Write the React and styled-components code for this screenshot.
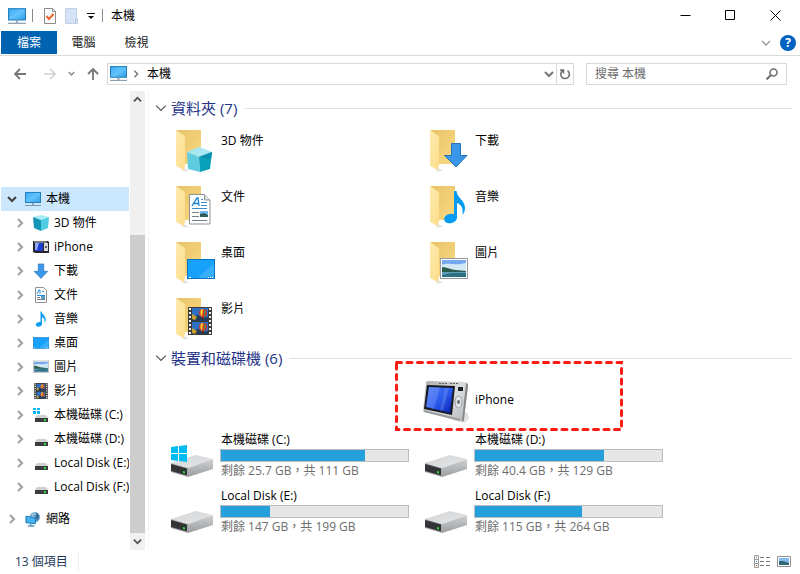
import { useState } from "react";
import styled, { createGlobalStyle } from "styled-components";

const GlobalStyle = createGlobalStyle`
  * {
    box-sizing: border-box;
  }
  body {
    margin: 0;
    background: #fff;
    color: #000;
    font-family: "Open Sans", "Noto Sans CJK TC", sans-serif;
    font-size: 12px;
    line-height: 16px;
  }
  button, input {
    font: inherit;
    color: inherit;
  }
  button {
    border: none;
    padding: 0;
    background: none;
  }
  svg {
    display: block;
    flex: none;
  }
`;

/* ---------- data ---------- */

const folders = [
  { name: "3D 物件", art: "cube" },
  { name: "下載", art: "download" },
  { name: "文件", art: "doc" },
  { name: "音樂", art: "music" },
  { name: "桌面", art: "desktop" },
  { name: "圖片", art: "picture" },
  { name: "影片", art: "video" },
];

const disks = [
  { name: "本機磁碟 (C:)", free: "25.7 GB", total: "111 GB", used: 77, system: true },
  { name: "本機磁碟 (D:)", free: "40.4 GB", total: "129 GB", used: 69 },
  { name: "Local Disk (E:)", free: "147 GB", total: "199 GB", used: 26 },
  { name: "Local Disk (F:)", free: "115 GB", total: "264 GB", used: 57 },
];

const treeItems = [
  { name: "3D 物件", art: "cube" },
  { name: "iPhone", art: "player" },
  { name: "下載", art: "download" },
  { name: "文件", art: "doc" },
  { name: "音樂", art: "music" },
  { name: "桌面", art: "desktop" },
  { name: "圖片", art: "picture" },
  { name: "影片", art: "video" },
  { name: "本機磁碟 (C:)", art: "system" },
  { name: "本機磁碟 (D:)", art: "drive" },
  { name: "Local Disk (E:)", art: "drive" },
  { name: "Local Disk (F:)", art: "drive" },
];

/* ---------- icons ---------- */

const Chevron = ({ dir = "right", size = 10, color = "#a0a0a0", weight = 2 }) => {
  const paths = {
    right: "M3 1l4 4-4 4",
    down: "M1 3l4 4 4-4",
    up: "M1 7l4-4 4 4",
  };
  return (
    <svg width={size} height={size} viewBox="0 0 10 10" fill="none" stroke={color} strokeWidth={weight}>
      <path d={paths[dir]} />
    </svg>
  );
};

const Monitor = ({ size = 16 }) => (
  <svg width={size} height={size} viewBox="0 0 16 16">
    <defs>
      <linearGradient id="screen" x1="0" y1="0" x2="1" y2="1">
        <stop offset="0" stopColor="#35a9f4" />
        <stop offset="0.5" stopColor="#63c3fb" />
        <stop offset="1" stopColor="#2f9be8" />
      </linearGradient>
    </defs>
    <rect x="0.5" y="1.5" width="15" height="10" fill="url(#screen)" stroke="#2581bd" />
    <path d="M7 12h2v2H7z" fill="#93a7b5" />
    <path d="M0 14.5h16" stroke="#7f99ab" />
  </svg>
);

const Network = () => (
  <svg width="16" height="16" viewBox="0 0 17 16">
    <circle cx="10.5" cy="6" r="5.5" fill="#5f9fcd" />
    <path d="M10.5 0.5c-3 2-3 9 0 11M5 6h11M6 3h9" stroke="#c6e0f2" strokeWidth="0.7" fill="none" />
    <path d="M12 1l3 3-1 5-3-2z" fill="#366b9b" />
    <path d="M1 5l10 2v6L1 12z" fill="#43b4f4" stroke="#1d76ae" />
    <path d="M6 13v2M3 15.5h7" stroke="#5f97bb" strokeWidth="1.5" />
  </svg>
);

// Balloon scene that fills each frame of the film strip
const Frame = ({ y, h }) => (
  <svg x="24" y={y} width="16" height={h} viewBox={`0 0 16 ${h}`}>
    <rect width="16" height={h} fill="#2f6fc4" />
    <path d="M0 9l6-2 5 3 5-1v6H0z" fill="#243c58" />
    <path d="M0 6l5 3-2 3-3-1z" fill="#c7a12c" />
    <circle cx="11" cy="5" r="4" fill="#d7322c" />
    <path d="M9 1.5c-1 2-1 5 1 7.5l1-8z" fill="#f3d22b" />
    <path d="M12 1.2c2 2 2 5 0 7.5z" fill="#3f9b46" />
    <path d="M10 9h2v2h-2z" fill="#5b3412" />
  </svg>
);

// Drawings on a shared 48px grid, placed where they sit on top of a folder
const art = {
  cube: (
    <>
      <path d="M31 20l13 5-13 5-12-5z" fill="#a5e8f2" />
      <path d="M19 25l12 5 1 15-12-3z" fill="#5fcbdf" />
      <path d="M31 30l13-5-2 17-10 3z" fill="#08a0ba" />
      <path d="M31 30l13-5-1 7z" fill="#0b8fb0" />
    </>
  ),
  download: <path d="M29.5 16.5h9v12h6.5l-11 11.5-11.5-11.5h7z" fill="#3a96e8" stroke="#2473bb" />,
  doc: (
    <>
      <path d="M21.5 11.5h15l5.5 5.5v24h-20.5z" fill="#fff" stroke="#8d9297" />
      <path d="M36.5 11.5v5.5h5.5" fill="#e2e6ea" stroke="#8d9297" />
      <path d="M24 23l5-8h1l1 8M26 20.5h5" fill="none" stroke="#1c83d4" strokeWidth="1.4" />
      <path d="M33 16.5h2M33 19.5h6M33 22.5h6M24 25.5h15" stroke="#3a8fd0" />
      <path d="M24 29.5h7M24 33.5h7M24 37.5h15" stroke="#7a7f85" />
      <path d="M32 28h8v6h-8z" fill="#76b8ee" />
      <path d="M32 31l4-1 4 2v2h-8z" fill="#2f5d5a" />
    </>
  ),
  music: (
    <>
      <ellipse cx="28.5" cy="35.5" rx="6.5" ry="4.7" transform="rotate(-12 28.5 35.5)" fill="#069bf2" />
      <path d="M32 8h2.5c.5 7 8.5 9 8.5 17 0 3-1 5-2.5 7 .8-6-.5-10-5.5-12v15h-3z" fill="#069bf2" />
    </>
  ),
  desktop: (
    <>
      <rect x="19.5" y="20.5" width="27" height="19" fill="#18a1fb" stroke="#0b74c4" />
      <path d="M30 39l16-15v15z" fill="#36affe" />
      <path d="M21 38.5h2M40 38.5h1M42 38.5h1M44 38.5h1" stroke="#fff" />
    </>
  ),
  picture: (
    <>
      <rect x="18.5" y="19.5" width="27" height="20" fill="#fff" stroke="#969a9e" />
      <path d="M20 21h24v17H20z" fill="#74a9f2" />
      <path d="M20 26c6-3 10 1 24-2v8H20z" fill="#d3e8f5" />
      <path d="M20 28c5 0 9 3 14 3l10 1v2H20z" fill="#2a5a4c" />
      <path d="M20 33h24v5H20z" fill="#5f9fba" />
      <path d="M20 36l10-2h14v4H20z" fill="#2c6f80" />
    </>
  ),
  video: (
    <>
      <path d="M20 12h24v28H20z" fill="#3b3b3b" />
      <path d="M22 13v27M42 13v27" stroke="#f2f2f2" strokeWidth="2" strokeDasharray="2 2" />
      <Frame y={13} h={13} />
      <Frame y={27} h={12} />
    </>
  ),
  player: (
    <>
      <defs>
        <linearGradient id="body" x1="0" y1="0" x2="1" y2="1">
          <stop offset="0" stopColor="#a9abad" />
          <stop offset="0.5" stopColor="#dcddde" />
          <stop offset="1" stopColor="#b6b8ba" />
        </linearGradient>
        <linearGradient id="lcd" x1="0" y1="0" x2="1" y2="1">
          <stop offset="0" stopColor="#4a7cf5" />
          <stop offset="0.5" stopColor="#2a5bef" />
          <stop offset="1" stopColor="#0a1fae" />
        </linearGradient>
      </defs>
      <path d="M30 44l13 3 4-5-2-6z" fill="#000" opacity="0.12" />
      <path d="M5 5l38 1c2 0 3 1 3 3l-4 34c0 2-2 3-4 2L2 36c-1 0-1-1-1-2L4 7z" fill="url(#body)" />
      <path d="M44 7c1 0 2 1 2 3l-4 33c0 2-1 3-2 2z" fill="#85878a" />
      <path d="M2 34l36 9v2L2 36z" fill="#97999c" />
      <path d="M5 9l28 1-3 29L2 33z" fill="#16181f" />
      <path d="M7 11l24 1-3 25L4 31z" fill="url(#lcd)" />
      <path d="M7 11l11 .5L12 33l-8-2z" fill="#fff" opacity="0.14" />
      <path d="M23 11.7h4L21 35l-3-1z" fill="#fff" opacity="0.14" />
      <path d="M17 7.5h8M28 7.5h8" stroke="#5b5e62" strokeDasharray="2 1" />
      <path d="M36 11h5v4h-5z" fill="#1e2023" />
      <ellipse cx="36.5" cy="26" rx="3.5" ry="6" fill="#e4e5e6" stroke="#9a9da1" />
      <ellipse cx="36.5" cy="26" rx="1.5" ry="2" fill="#6a6d71" />
    </>
  ),
  drive: (
    <>
      <defs>
        <linearGradient id="lid" x1="0" y1="0" x2="1" y2="1">
          <stop offset="0" stopColor="#d3d4d6" />
          <stop offset="1" stopColor="#e6e7e8" />
        </linearGradient>
        <linearGradient id="side" x1="0" y1="0" x2="0" y2="1">
          <stop offset="0" stopColor="#cfd0d2" />
          <stop offset="1" stopColor="#9b9da0" />
        </linearGradient>
      </defs>
      <path d="M3 31l25-8 17 4-25 9z" fill="url(#lid)" />
      <path d="M20 36l25-9v10l-25 8z" fill="url(#side)" />
      <path d="M3 31l17 5v9L3 40z" fill="#a3a5a7" />
      <path d="M3 32l16 4.5v7L3 39z" fill="#323436" />
      <path d="M15 39l2 .5v2l-2-.5z" fill="#25e03a" />
    </>
  ),
};

const winLogo = (
  <path d="M3 15l7-1v7H3zM11 14l8-1v8h-8zM3 22h7v7l-7-1zM11 22h8v8l-8-1z" fill="#00bcf2" />
);

const folderBase = (
  <>
    <defs>
      <linearGradient id="folderBack" x1="0" y1="0" x2="1" y2="1">
        <stop offset="0" stopColor="#eac268" />
        <stop offset="1" stopColor="#f7da83" />
      </linearGradient>
      <linearGradient id="folderFlap" x1="0" y1="0" x2="1" y2="1">
        <stop offset="0" stopColor="#ffebb0" />
        <stop offset="1" stopColor="#fbdd8b" />
      </linearGradient>
    </defs>
    <path d="M13 43l5 2 3-2-5-2z" fill="#000" opacity="0.1" />
    <path d="M8 3h25v34H15z" fill="url(#folderBack)" />
    <path d="M8 3l9 6v29l-1 5-8-4z" fill="url(#folderFlap)" />
  </>
);

const LargeIcon = ({ name, folder, system }) => (
  <svg width="48" height="48" viewBox="0 0 48 48">
    {folder && folderBase}
    {art[name]}
    {system && winLogo}
  </svg>
);

// Crop of the 48px grid that holds each drawing
const crops = {
  download: "21 15 26 26",
  music: "16 7 34 34",
  desktop: "19 16 28 28",
  picture: "18 16 28 28",
  video: "18 12 28 28",
};

// Simplified drawings for the 16px size
const smallArt = {
  cube: (
    <>
      <path d="M0 2l8-2 8 2-8 3z" fill="#a7ecf5" />
      <path d="M0 2l8 3v11l-7-3z" fill="#1597b8" />
      <path d="M8 5l8-3-1 11-7 3z" fill="#4fcbe2" />
    </>
  ),
  doc: (
    <>
      <path d="M2.5 0.5h8l3 3v12h-11z" fill="#fff" stroke="#8d9297" />
      <path d="M4 7l2-4h1v4M9 4.5h2M4 8.5h8" fill="none" stroke="#2a8ad6" />
      <path d="M4 10.5h3M4 12.5h8" stroke="#7a7f85" />
      <path d="M8 9h4v3H8z" fill="#5d9cc9" />
    </>
  ),
  player: (
    <>
      <path d="M0 2h15l1 1v11H2l-2-1z" fill="#24262c" />
      <path d="M2 4h8v8H2z" fill="#1c3fd0" />
      <path d="M2 4h4l-2 7H2z" fill="#8faaff" />
      <path d="M1 3h13" stroke="#c9cbce" />
      <rect x="11" y="4" width="4" height="8" fill="#d7d9db" />
      <circle cx="13" cy="8" r="1" fill="#3a3c40" />
    </>
  ),
  drive: (
    <>
      <path d="M4 8h9l2 3H2z" fill="#cfd1d3" />
      <path d="M2 11h13v4H2z" fill="#3a3c3e" />
      <path d="M11 12h2v2h-2z" fill="#2bdc3f" />
    </>
  ),
};
smallArt.system = (
  <>
    <path d="M0 1h3v2H0zM4 1h3v2H4zM0 4h3v3H0zM4 4h3v3H4z" fill="#00b4f0" />
    {smallArt.drive}
  </>
);

const SmallIcon = ({ name }) => (
  <svg width="16" height="16" viewBox={crops[name] || "0 0 16 16"}>
    {smallArt[name] || art[name]}
  </svg>
);

/* ---------- page ---------- */

const App = () => {
  const [keyword, setKeyword] = useState("");

  return (
    <Window lang="zh-Hant">
      <GlobalStyle />
      <TitleBar>
        <Monitor size={18} />
        <Divider />
        <QuickTools>
          <button aria-label="內容">
            <svg width="14" height="16" viewBox="0 0 14 16">
              <path d="M1.5 0.5h8l3 3v12h-11z" fill="#fcfcfc" stroke="#8c8c8c" />
              <path d="M9.5 0.5v3h3" fill="none" stroke="#8c8c8c" />
              <path d="M3.5 8l2.5 3 4.5-5" fill="none" stroke="#e8642c" strokeWidth="2" />
            </svg>
          </button>
          <button aria-label="新增資料夾">
            <svg width="14" height="16" viewBox="0 0 14 16">
              <path d="M0.5 0.5h11v10h1v5h-12z" fill="#d6e2f5" stroke="#c3d1e8" />
              <path d="M10.5 15v-4h2" fill="none" stroke="#b4c5e0" />
            </svg>
          </button>
          <button aria-label="自訂快速存取工具列">
            <svg width="8" height="8" viewBox="0 0 8 8">
              <path d="M0 1h8v1H0zM1 4h6L4 7z" fill="#111" />
            </svg>
          </button>
        </QuickTools>
        <Divider />
        <Title>本機</Title>
        <WindowButton aria-label="最小化">
          <svg width="11" height="11" viewBox="0 0 11 11">
            <path d="M0.5 5.5h10" stroke="#000" />
          </svg>
        </WindowButton>
        <WindowButton aria-label="最大化">
          <svg width="11" height="11" viewBox="0 0 11 11">
            <path d="M0.5 0.5h9v9h-9z" fill="none" stroke="#000" />
          </svg>
        </WindowButton>
        <WindowButton aria-label="關閉">
          <svg width="11" height="11" viewBox="0 0 11 11">
            <path d="M0.5 0.5l10 10M10.5 0.5l-10 10" stroke="#000" />
          </svg>
        </WindowButton>
      </TitleBar>

      <Ribbon>
        <Tab $active>檔案</Tab>
        <Tab>電腦</Tab>
        <Tab>檢視</Tab>
        <RibbonTools>
          <button aria-label="展開功能區">
            <Chevron dir="down" weight={1.3} color="#999" />
          </button>
          <HelpButton aria-label="說明">?</HelpButton>
        </RibbonTools>
      </Ribbon>

      <AddressRow>
        <NavButtons>
          <button aria-label="上一頁">
            <svg width="12" height="12" viewBox="0 0 12 12" fill="none" stroke="#777" strokeWidth="1.8">
              <path d="M12 6H1M6 1L1 6l5 5" />
            </svg>
          </button>
          <button aria-label="下一頁">
            <svg width="12" height="12" viewBox="0 0 12 12" fill="none" stroke="#d2d2d2" strokeWidth="1.6">
              <path d="M0 6h11M6 1l5 5-5 5" />
            </svg>
          </button>
          <button aria-label="最近的位置">
            <Chevron dir="down" size={7} color="#888" />
          </button>
          <button aria-label="上一層">
            <svg width="12" height="12" viewBox="0 0 12 12" fill="none" stroke="#777" strokeWidth="1.8">
              <path d="M6 12V1M1 6l5-5 5 5" />
            </svg>
          </button>
        </NavButtons>
        <AddressBox>
          <Monitor size={17} />
          <Chevron size={8} color="#777" weight={1.8} />
          <Crumb href="#">本機</Crumb>
          <button aria-label="先前的位置">
            <Chevron dir="down" color="#777" />
          </button>
          <Refresh aria-label="重新整理">
            <svg width="12" height="12" viewBox="0 0 12 12" fill="none" stroke="#707070" strokeWidth="1.6">
              <path d="M4 2.5a4.3 4.3 0 1 0 4.5.2M1 2h3.5v3.5" />
            </svg>
          </Refresh>
        </AddressBox>
        <SearchBox>
          <input
            aria-label="搜尋"
            placeholder="搜尋 本機"
            value={keyword}
            onChange={(e) => setKeyword(e.target.value)}
          />
          <svg width="12" height="12" viewBox="0 0 12 12" fill="none" stroke="#707070" strokeWidth="1.6">
            <circle cx="7.5" cy="4.5" r="3.5" />
            <path d="M5 7l-4.5 4.5" strokeWidth="2" />
          </svg>
        </SearchBox>
      </AddressRow>

      <Body>
        <Tree>
          <TreeRow $selected>
            <Chevron dir="down" color="#404040" />
            <Monitor />
            <span>本機</span>
          </TreeRow>
          {treeItems.map((item) => (
            <TreeRow key={item.name} $child>
              <Chevron />
              <SmallIcon name={item.art} />
              <span>{item.name}</span>
            </TreeRow>
          ))}
          <NetworkRow>
            <Chevron />
            <Network />
            <span>網路</span>
          </NetworkRow>
        </Tree>
        <ScrollBar>
          <button aria-label="向上捲動">
            <Chevron dir="up" size={9} color="#505050" />
          </button>
          <ScrollThumb />
          <button aria-label="向下捲動">
            <Chevron dir="down" size={9} color="#505050" />
          </button>
        </ScrollBar>

        <Content>
          <GroupHeader>
            <Chevron dir="down" size={12} weight={1} color="#555" />
            <h2>資料夾 (7)</h2>
          </GroupHeader>
          <FolderGrid>
            {folders.map((item) => (
              <Item key={item.name}>
                <LargeIcon name={item.art} folder />
                <FolderName>{item.name}</FolderName>
              </Item>
            ))}
          </FolderGrid>

          <GroupHeader>
            <Chevron dir="down" size={12} weight={1} color="#555" />
            <h2>裝置和磁碟機 (6)</h2>
          </GroupHeader>
          <Grid>
            <DeviceItem>
              <LargeIcon name="player" />
              <DeviceName>iPhone</DeviceName>
              <Highlight>
                <rect x="1.5" y="1.5" width="225" height="67" />
              </Highlight>
            </DeviceItem>
            {disks.map((disk) => (
              <Item key={disk.name}>
                <LargeIcon name="drive" system={disk.system} />
                <DiskInfo>
                  <DiskName>{disk.name}</DiskName>
                  <Bar role="progressbar" aria-label={disk.name} aria-valuenow={disk.used}>
                    <BarFill style={{ width: `${disk.used}%` }} />
                  </Bar>
                  <DiskSpace>{`剩餘 ${disk.free}\uFF0C共 ${disk.total}`}</DiskSpace>
                </DiskInfo>
              </Item>
            ))}
          </Grid>
        </Content>
      </Body>

      <StatusBar>
        <span>13 個項目</span>
        <Divider $light />
        <ViewButtons>
          <button aria-label="詳細資料">
            <svg width="16" height="14" viewBox="0 0 16 14">
              <path d="M0.5 0.5h4v12h-4zM0.5 4.5h4M0.5 8.5h4" fill="none" stroke="#999" />
              <path d="M2 2h1v1H2z" fill="#2d8a4e" />
              <path d="M2 6h1v1H2z" fill="#2f7de0" />
              <path d="M2 10h1v1H2z" fill="#e01f1f" />
              <path d="M6 2.5h4M12 2.5h4M6 6.5h4M12 6.5h4M6 10.5h4M12 10.5h4" stroke="#777" />
            </svg>
          </button>
          <button aria-label="大圖示">
            <svg width="14" height="12" viewBox="0 0 14 12">
              <path d="M0.5 0.5h13v10h-13z" fill="#fff" stroke="#8f8f8f" />
              <path d="M2 2h10v7H2z" fill="#86b9f0" />
              <path d="M2 5h4l6 2v2H2z" fill="#2f6a70" />
            </svg>
          </button>
        </ViewButtons>
      </StatusBar>
    </Window>
  );
};

export default App;

/* ---------- styles ---------- */

const Window = styled.div`
  display: flex;
  flex-direction: column;
  min-height: 100vh;
`;

const TitleBar = styled.header`
  display: flex;
  align-items: center;
  height: 31px;
  padding: 0 2px 0 8px;
`;

const Divider = styled.span`
  width: 1px;
  height: ${(props) => (props.$light ? "18px" : "13px")};
  margin: ${(props) => (props.$light ? "0 10px" : "0 8px 0 6px")};
  background: ${(props) => (props.$light ? "#f0f0f0" : "#8a8a8a")};
`;

const QuickTools = styled.div`
  display: flex;
  align-items: center;
  gap: 8px;
  padding: 0 1px 0 2px;
`;

const Title = styled.h1`
  flex: 1;
  margin: 0;
  font-size: 12px;
  font-weight: 400;
`;

const WindowButton = styled.button`
  display: flex;
  align-items: center;
  justify-content: center;
  width: 45px;
  height: 30px;
`;

const Ribbon = styled.nav`
  display: flex;
  height: 25px;
  padding: 0 4px 0 1px;
  border-bottom: 1px solid #dadbdc;
`;

const Tab = styled.button`
  width: ${(props) => (props.$active ? "56px" : "53px")};
  height: 23px;
  color: ${(props) => (props.$active ? "#fff" : "#222")};
  background: ${(props) => (props.$active ? "#0063b1" : "none")};
`;

const RibbonTools = styled.div`
  display: flex;
  align-items: center;
  gap: 9px;
  margin-left: auto;
`;

const HelpButton = styled.button`
  width: 16px;
  height: 16px;
  border-radius: 50%;
  background: #0063c1;
  color: #fff;
  font-weight: 700;
`;

const AddressRow = styled.div`
  display: flex;
  align-items: center;
  height: 35px;
  padding: 0 13px 0 14px;
`;

const NavButtons = styled.div`
  display: flex;
  align-items: center;
  width: 93px;

  button {
    margin-right: 12px;
  }
  button:first-child {
    margin-right: 18px;
  }
  button:last-child {
    margin: 0;
  }
`;

const AddressBox = styled.div`
  display: flex;
  align-items: center;
  gap: 5px;
  flex: 1;
  height: 22px;
  padding-left: 2px;
  border: 1px solid #d9d9d9;
`;

const Crumb = styled.a`
  flex: 1;
  padding-left: 2px;
  color: inherit;
  text-decoration: none;
`;

const Refresh = styled.button`
  display: flex;
  align-items: center;
  align-self: stretch;
  justify-content: center;
  width: 17px;
  margin-left: -3px;
  border-left: 1px solid #d9d9d9;
`;

const SearchBox = styled.label`
  display: flex;
  align-items: center;
  width: 201px;
  height: 22px;
  margin-left: 12px;
  padding: 0 8px;
  border: 1px solid #d9d9d9;

  input {
    flex: 1;
    min-width: 0;
    padding: 0;
    border: none;
    outline: none;
  }
  input::placeholder {
    color: #6d6d6d;
  }
`;

const Body = styled.div`
  display: flex;
  flex: 1;
`;

const Tree = styled.nav`
  width: 130px;
  padding: 96px 1px 0;
`;

const TreeRow = styled.div`
  display: flex;
  align-items: center;
  height: 24px;
  padding-left: ${(props) => (props.$child ? "14px" : "6px")};
  background: ${(props) => (props.$selected ? "#cce8ff" : "none")};
  overflow: hidden;
  white-space: nowrap;

  svg:first-child {
    margin-right: 8px;
  }
  span {
    margin-left: 5px;
  }
`;

const NetworkRow = styled(TreeRow)`
  margin-top: 8px;
`;

const ScrollBar = styled.div`
  display: flex;
  flex-direction: column;
  width: 15px;
  background: #f0f0f0;

  button {
    display: flex;
    align-items: center;
    justify-content: center;
    height: 17px;
  }
`;

const ScrollThumb = styled.div`
  flex: 1;
  margin-top: 127px;
  background: #cdcdcd;
`;

const Content = styled.main`
  flex: 1;
  margin-left: 3px;
  padding: 6px 8px 0 6px;
  border-left: 1px solid #f5f5f5;
`;

const GroupHeader = styled.div`
  display: flex;
  align-items: center;
  height: 22px;
  margin-bottom: 3px;

  h2 {
    margin: 0 7px 0 4px;
    color: #1e3287;
    font-size: 15px;
    font-weight: 400;
  }
  &::after {
    content: "";
    flex: 1;
    height: 1px;
    background: #e2e2e2;
  }
`;

const Grid = styled.div`
  display: grid;
  grid-template-columns: repeat(2, 254px);
  grid-auto-rows: 56px;
  padding-left: 13px;
`;

const FolderGrid = styled(Grid)`
  padding-top: 1px;
`;

const Item = styled.div`
  display: flex;
  gap: 4px;

  & > svg:first-child {
    margin-top: 4px;
  }
`;

const DeviceItem = styled(Item)`
  position: relative;
  grid-column: 2;
`;

const FolderName = styled.span`
  padding: 10px 0 0 1px;
`;

const DeviceName = styled.span`
  padding: 20px 0 0 1px;
`;

const Highlight = styled.svg`
  position: absolute;
  top: -11px;
  left: -27px;
  width: 228px;
  height: 70px;
  fill: none;
  stroke: #fb1b12;
  stroke-width: 3px;
  stroke-dasharray: 5 5.5;
  stroke-linecap: round;
`;

const DiskInfo = styled.div`
  width: 189px;
  padding-top: 4px;
`;

const DiskName = styled.div`
  padding-left: 1px;
`;

const Bar = styled.div`
  height: 13px;
  margin-top: 1px;
  border: 1px solid #bcbcbc;
  background: #e6e6e6;
`;

const BarFill = styled.div`
  height: 100%;
  background: #26a0da;
`;

const DiskSpace = styled.div`
  margin-top: 1px;
  padding-left: 1px;
  color: #6d6d6d;
`;

const StatusBar = styled.footer`
  display: flex;
  align-items: center;
  height: 24px;
  padding: 0 9px 0 15px;
  color: #1e395b;
`;

const ViewButtons = styled.div`
  display: flex;
  align-items: center;
  gap: 7px;
  margin-left: auto;
`;
